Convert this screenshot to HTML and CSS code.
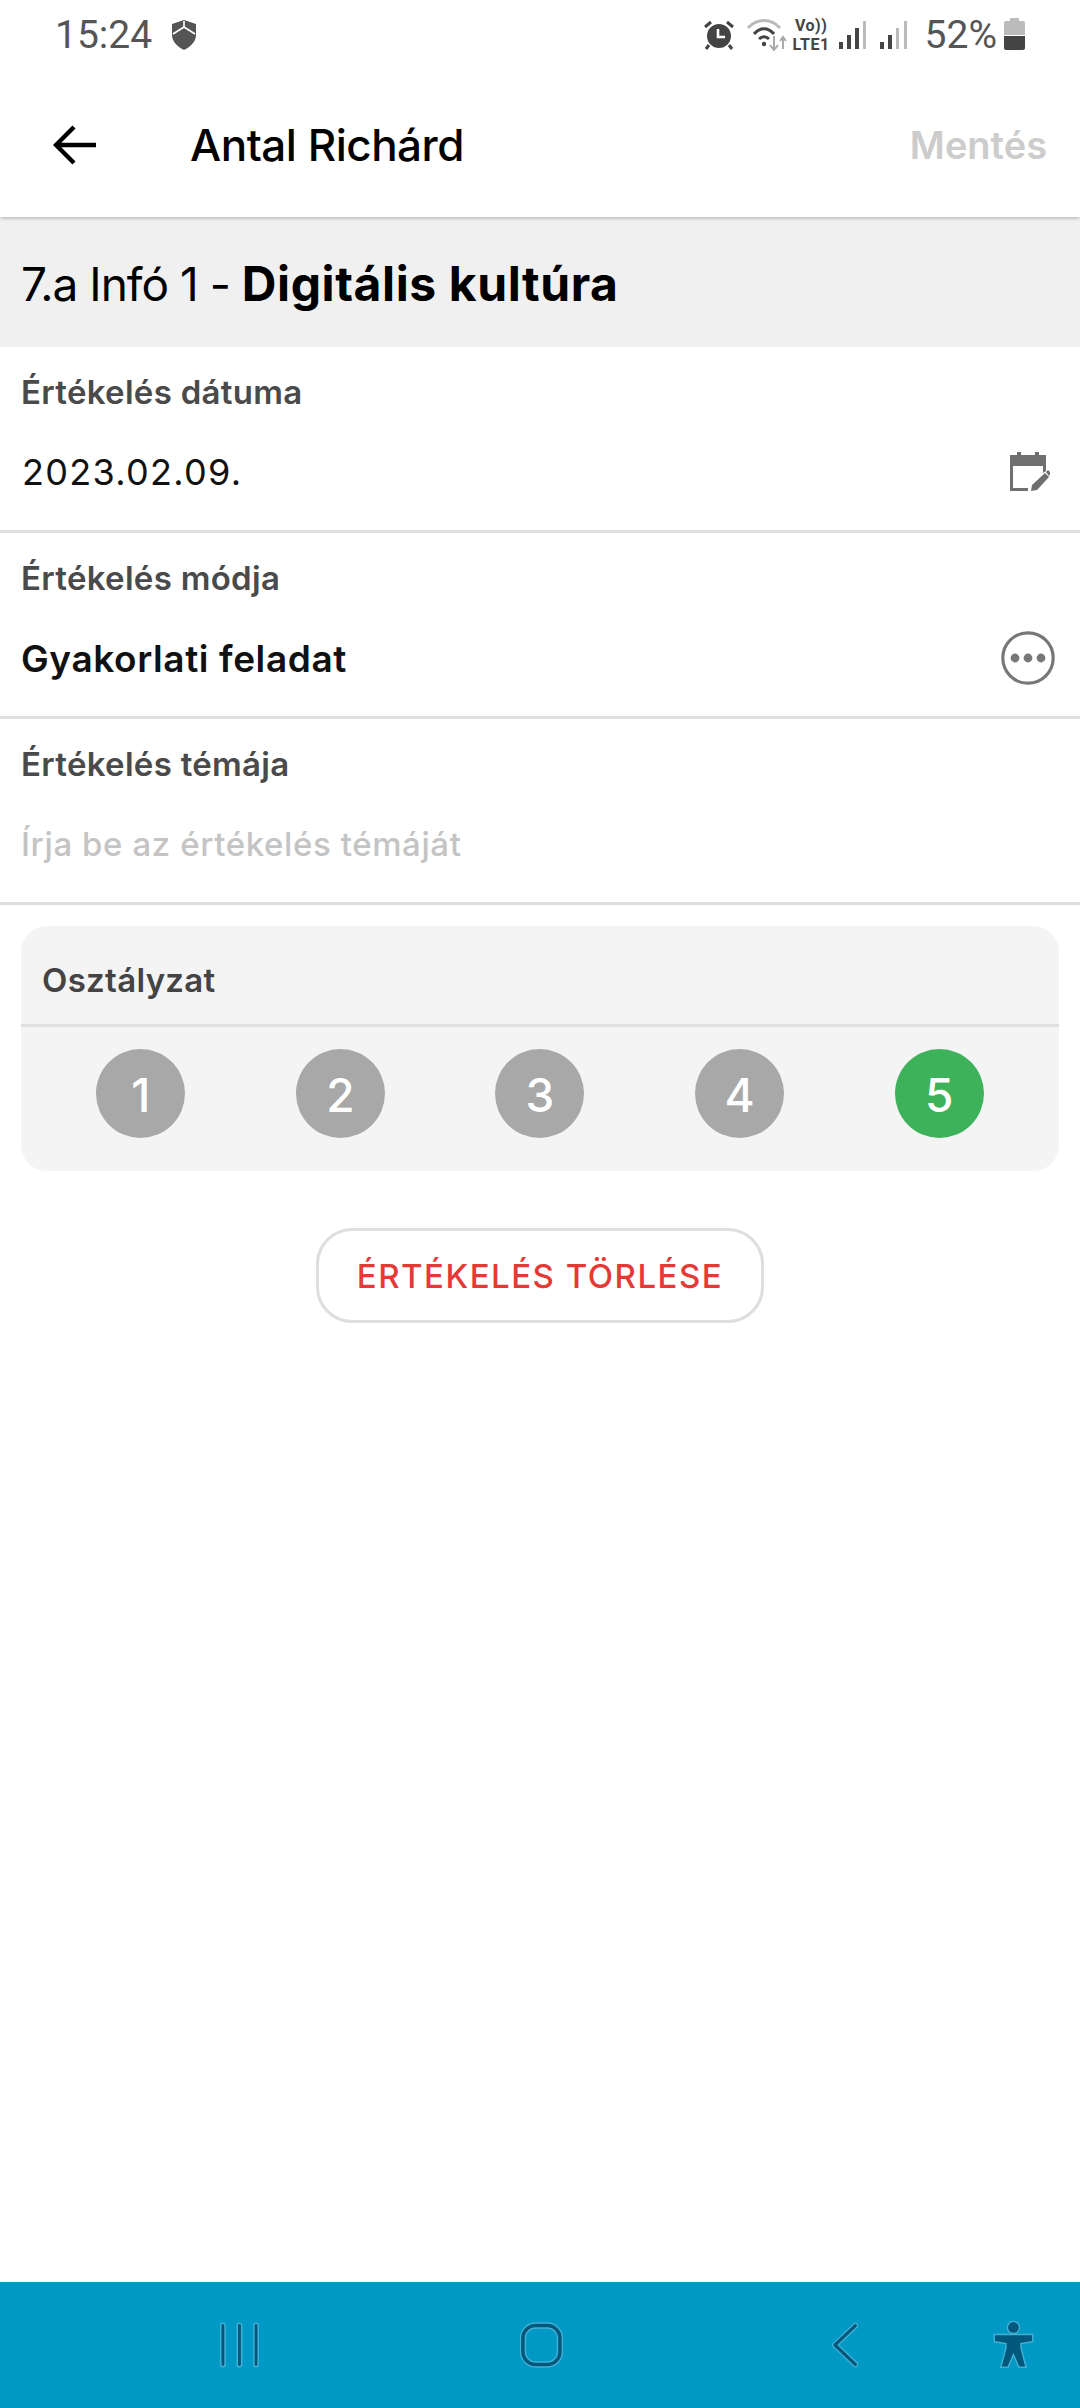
FILE: index.html
```html
<!doctype html>
<html lang="hu">
  <head>
    <meta charset="UTF-8" />
    <title>Értékelés</title>
    <link rel="stylesheet" href="styles.css">
  </head>
  <body>
    <div id="screen">
      <div class="statusBar">
        <span class="clock">15:24</span>
        <svg class="shield" width="24" height="30" viewBox="0 0 24 30">
          <path d="M12 0 L24 4 V15 C24 22 18 27 12 30 C6 27 0 22 0 15 V4 Z" fill="#555"/>
          <path d="M12 1 V7 M12 7 L1 14 M12 7 L23 14" stroke="#fff" stroke-width="1.6" fill="none"/>
        </svg>
        <span class="statusSpacer"></span>
        <svg class="alarm" width="30" height="30" viewBox="0 0 30 30">
          <circle cx="15" cy="16" r="12" fill="#444"/>
          <path d="M1 7 L7 2 M29 7 L23 2" stroke="#444" stroke-width="3"/>
          <path d="M5 25 L2 29 M25 25 L28 29" stroke="#444" stroke-width="3"/>
          <path d="M14 9 V17 H21" stroke="#fff" stroke-width="2.6" fill="none"/>
        </svg>
        <svg class="wifi" width="40" height="32" viewBox="0 0 40 32">
          <path d="M1 9 C10 -1 24 -1 33 9" stroke="#bbb" stroke-width="3" fill="none"/>
          <path d="M7 15 C13 8 21 8 27 15" stroke="#444" stroke-width="3" fill="none"/>
          <path d="M12 20 C15 17 19 17 22 20" stroke="#444" stroke-width="3" fill="none"/>
          <circle cx="17" cy="25" r="2.2" fill="#444"/>
          <path d="M27 17 V30 M23 26 L27 31 L31 26" stroke="#aaa" stroke-width="2" fill="none"/>
          <path d="M36 30 V19 M33 22 L36 18 L39 22" stroke="#aaa" stroke-width="2" fill="none"/>
        </svg>
        <span class="netType"><span class="volte">Vo))</span><span>LTE1</span></span>
        <svg class="signal" width="28" height="30" viewBox="0 0 28 30">
          <rect x="0" y="22" width="4" height="7" fill="#444"/>
          <rect x="8" y="15" width="4" height="14" fill="#444"/>
          <rect x="16" y="8" width="4" height="21" fill="#444"/>
          <rect x="24" y="1" width="3" height="28" fill="#bbb"/>
        </svg>
        <svg class="signal" width="28" height="30" viewBox="0 0 28 30">
          <rect x="0" y="22" width="4" height="7" fill="#444"/>
          <rect x="8" y="15" width="4" height="14" fill="#444"/>
          <rect x="16" y="8" width="3" height="21" fill="#bbb"/>
          <rect x="24" y="1" width="3" height="28" fill="#bbb"/>
        </svg>
        <span class="battPct">52%</span>
        <svg class="battery" width="21" height="32" viewBox="0 0 21 32">
          <path d="M6 0 H15 V3 H19 Q21 3 21 5 V17 H0 V5 Q0 3 2 3 H6 Z" fill="#bbb"/>
          <path d="M0 18 H21 V30 Q21 32 19 32 H2 Q0 32 0 30 Z" fill="#444"/>
        </svg>
      </div>

      <header class="topBar">
        <svg class="backArrow" width="44" height="40" viewBox="0 0 44 40">
          <path d="M43 20 H3 M21 2 L3 20 L21 38" stroke="#000" stroke-width="4.4" fill="none"/>
        </svg>
        <h1 class="topTitle">Antal Richárd</h1>
        <span class="saveBtn">Mentés</span>
      </header>

      <div class="lessonBar">7.a Infó 1 - <b>Digitális kultúra</b></div>

      <div class="field">
        <label class="fieldLabel">Értékelés dátuma</label>
        <div class="fieldRow">
          <span class="dateValue">2023.02.09.</span>
          <svg class="calIcon" width="40" height="40" viewBox="0 0 40 40">
            <path d="M7 0 H11 V3 H25 V0 H29 V3 H36 V19 L33 21 V14 H3 V36 H18 V39 H0 V3 H7 Z" fill="#6f6f6f"/>
            <path d="M21 39 L22 33 L35 21 L39 25 L27 38 Z M36 20 L38 18 L41 21 L39 24 Z" fill="#6f6f6f"/>
          </svg>
        </div>
      </div>

      <div class="field">
        <label class="fieldLabel">Értékelés módja</label>
        <div class="fieldRow">
          <span class="modeValue">Gyakorlati feladat</span>
          <svg class="moreIcon" width="54" height="54" viewBox="0 0 54 54">
            <circle cx="27" cy="27" r="25.2" stroke="#777" stroke-width="3.2" fill="none"/>
            <circle cx="14" cy="27" r="4.4" fill="#777"/>
            <circle cx="27" cy="27" r="4.4" fill="#777"/>
            <circle cx="40" cy="27" r="4.4" fill="#777"/>
          </svg>
        </div>
      </div>

      <div class="field">
        <label class="fieldLabel">Értékelés témája</label>
        <div class="fieldRow">
          <span class="placeholder">Írja be az értékelés témáját</span>
        </div>
      </div>

      <div class="gradeCard">
        <div class="gradeTitle">Osztályzat</div>
        <div class="gradeRow">
          <span class="gradeCell"><span class="gradeDot">1</span></span>
          <span class="gradeCell"><span class="gradeDot">2</span></span>
          <span class="gradeCell"><span class="gradeDot">3</span></span>
          <span class="gradeCell"><span class="gradeDot">4</span></span>
          <span class="gradeCell"><span class="gradeDot selected">5</span></span>
        </div>
      </div>

      <div class="deleteArea">
        <button class="deleteBtn">ÉRTÉKELÉS TÖRLÉSE</button>
      </div>

      <nav class="navBar">
        <svg class="navRecents" width="42" height="46" viewBox="0 0 42 46">
          <path d="M4 3 V43 M21 3 V43 M38 3 V43" stroke="#45afd2" stroke-width="6" stroke-linecap="round"/>
          <path d="M4 3 V43 M21 3 V43 M38 3 V43" stroke="#03597d" stroke-width="3" stroke-linecap="round"/>
        </svg>
        <svg class="navHome" width="44" height="46" viewBox="0 0 44 46">
          <rect x="3" y="3" width="38" height="40" rx="13" stroke="#45afd2" stroke-width="6.5" fill="none"/>
          <rect x="3" y="3" width="38" height="40" rx="13" stroke="#03597d" stroke-width="3.6" fill="none"/>
        </svg>
        <svg class="navBack" width="28" height="46" viewBox="0 0 28 46">
          <path d="M25 3 L4 23 L25 43" stroke="#45afd2" stroke-width="6" fill="none" stroke-linecap="round" stroke-linejoin="round"/>
          <path d="M25 3 L4 23 L25 43" stroke="#03597d" stroke-width="3.2" fill="none" stroke-linecap="round" stroke-linejoin="round"/>
        </svg>
        <svg class="navAccess" width="42" height="50" viewBox="0 0 42 50">
          <g stroke="#45afd2" stroke-width="3" fill="#03597d" paint-order="stroke">
            <circle cx="21" cy="7" r="5.5"/>
            <path d="M2 15 H40 V21 L28 23 V28 L33 47 H27 L21 33 L15 47 H9 L14 28 V23 L2 21 Z"/>
          </g>
        </svg>
      </nav>
    </div>
  </body>
</html>
```

FILE: styles.css
```css
* {
  box-sizing: border-box;
}
html, body {
  margin: 0;
  padding: 0;
}
body {
  font-family: "Inter", "Liberation Sans", sans-serif;
  background-color: #fff;
}
#screen {
  width: 1080px;
  height: 2408px;
  display: flex;
  flex-direction: column;
  overflow: hidden;
}

/* status bar */
.statusBar {
  height: 68px;
  padding: 17px 55px 0 55px;
  display: flex;
  align-items: flex-start;
  font-family: "Roboto", sans-serif;
  color: #555;
}
.clock {
  font-size: 39px;
  line-height: 36px;
}
.shield {
  margin-left: 20px;
  margin-top: 3px;
}
.statusSpacer {
  flex: 1;
}
.alarm {
  margin-top: 3px;
}
.wifi {
  margin-left: 13px;
  margin-top: 2px;
}
.netType {
  margin-left: 6px;
  margin-top: -1px;
  display: flex;
  flex-direction: column;
  font-size: 16px;
  line-height: 19px;
  font-weight: 700;
  color: #444;
  letter-spacing: 0.5px;
  align-items: center;
}
.signal {
  margin-left: 9px;
  margin-top: 3px;
}
.signal + .signal {
  margin-left: 13px;
}
.battPct {
  margin-left: 17px;
  font-size: 39px;
  line-height: 36px;
}
.battery {
  margin-left: 7px;
  margin-top: 1px;
}

/* top bar */
.topBar {
  height: 149px;
  padding: 5px 33px 0 53px;
  display: flex;
  align-items: center;
  background-color: #fff;
  box-shadow: 0 3px 3px -1px rgba(0, 0, 0, 0.2);
  position: relative;
}
.backArrow {
  flex: none;
}
.topTitle {
  margin: 0 0 0 93px;
  flex: 1;
  font-size: 44px;
  font-weight: 500;
  color: #000;
  letter-spacing: -0.5px;
}
.saveBtn {
  font-size: 38px;
  font-weight: 600;
  color: #cccccc;
}

.lessonBar {
  height: 130px;
  padding: 3px 0 0 21px;
  display: flex;
  align-items: center;
  white-space: pre-wrap;
  background-color: #f0f0f0;
  font-size: 46px;
  color: #000;
  letter-spacing: -1px;
}
.lessonBar b {
  font-size: 48px;
  font-weight: 700;
  letter-spacing: 0.6px;
}

/* form rows */
.field {
  height: 186px;
  padding: 0 21px;
  border-bottom: 3px solid #dedede;
}
.fieldLabel {
  display: block;
  padding-top: 25px;
  font-size: 33px;
  line-height: 40px;
  font-weight: 600;
  color: #4a4a4a;
  letter-spacing: 0.3px;
}
.fieldRow {
  height: 96px;
  padding-top: 24px;
  display: flex;
  align-items: center;
  justify-content: space-between;
}
.dateValue {
  margin-left: 1px;
  font-size: 36px;
  color: #111;
  letter-spacing: 1.3px;
}
.calIcon {
  margin-right: 9px;
}
.modeValue {
  font-size: 37px;
  font-weight: 600;
  color: #111;
  letter-spacing: 0.6px;
}
.moreIcon {
  margin-right: 4px;
}
.placeholder {
  font-size: 33px;
  font-weight: 500;
  color: #c4c4c4;
  letter-spacing: 0.6px;
}

/* grade card */
.gradeCard {
  margin: 21px 21px 0 21px;
  height: 245px;
  background-color: #f4f4f4;
  border-radius: 26px;
}
.gradeTitle {
  height: 101px;
  padding: 34px 0 0 21px;
  font-size: 33px;
  line-height: 40px;
  font-weight: 600;
  color: #444;
  letter-spacing: 0.3px;
  border-bottom: 3px solid #dfdfdf;
}
.gradeRow {
  padding: 22px 20px 0 20px;
  display: grid;
  grid-template-columns: repeat(5, 1fr);
}
.gradeCell {
  display: flex;
  justify-content: center;
}
.gradeDot {
  width: 89px;
  height: 89px;
  border-radius: 50%;
  display: flex;
  align-items: center;
  justify-content: center;
  padding-top: 2px;
  background-color: #a8a8a8;
  color: #fff;
  font-size: 46px;
  font-weight: 500;
}
.gradeDot.selected {
  background-color: #3db25a;
}

/* delete button */
.deleteArea {
  flex: 1;
  padding-top: 57px;
  display: flex;
  justify-content: center;
  align-items: flex-start;
}
.deleteBtn {
  width: 448px;
  height: 95px;
  background-color: #fff;
  border: 3px solid #dedede;
  border-radius: 36px;
  font-family: inherit;
  font-size: 33px;
  font-weight: 500;
  color: #e53935;
  letter-spacing: 1.5px;
}

/* android navigation */
.navBar {
  height: 126px;
  flex: none;
  padding: 0 46px 0 219px;
  display: flex;
  align-items: center;
  background-color: #0099c6;
}
.navHome {
  margin-left: 260px;
}
.navBack {
  margin-left: 268px;
}
.navAccess {
  margin-left: 135px;
}
```
